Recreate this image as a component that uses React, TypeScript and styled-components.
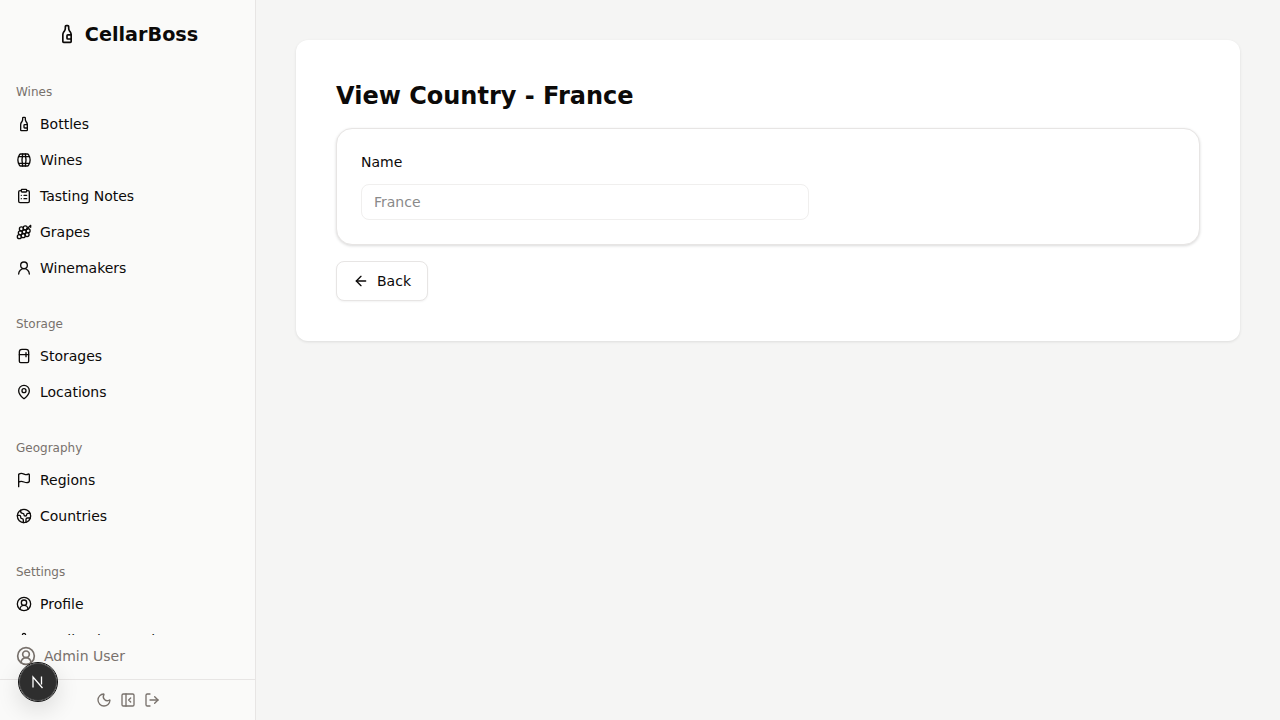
import React from 'react';
import styled, { createGlobalStyle } from 'styled-components';
import {
  ArrowLeft,
  BottleWine,
  CircleUserRound,
  ClipboardList,
  Earth,
  Flag,
  Grape,
  LogOut,
  MapPin,
  Moon,
  PanelLeftClose,
  Refrigerator,
  Settings,
  UserRound,
} from 'lucide-react';

const GlobalStyle = createGlobalStyle`
  html, body { margin: 0; padding: 0; height: 100%; }
  body {
    background: #f5f5f4;
    font-family: "DejaVu Sans", sans-serif;
    color: #0c0a09;
    overflow: hidden;
  }
  * { box-sizing: border-box; }
`;

const BarrelIcon = ({ size = 16 }: { size?: number }) => (
  <svg width={size} height={size} viewBox="0 0 24 24" fill="none" stroke="currentColor" strokeWidth="2" strokeLinecap="round" strokeLinejoin="round">
    <path d="M10 3a41 41 0 0 0 0 18" />
    <path d="M14 3a41 41 0 0 1 0 18" />
    <path d="M17 3a2 2 0 0 1 1.680.920 15.250 15.250 0 0 1 0 16.160A2 2 0 0 1 17 21H7a2 2 0 0 1-1.680-.920 15.250 15.250 0 0 1 0-16.160A2 2 0 0 1 7 3Z" />
    <path d="M3.840 17h16.320" />
    <path d="M3.840 7h16.320" />
  </svg>
);

const NextMark = () => (
  <svg width="14" height="14" viewBox="0 0 14 14" fill="none" stroke="#fff" strokeWidth="1.300">
    <path d="M2 12.500V2l9.500 11" />
    <path d="M10.500 1.500v8" />
  </svg>
);

type NavEntry = { label: string; icon: React.ReactNode };

const sections: { title: string; items: NavEntry[] }[] = [
  {
    title: 'Wines',
    items: [
      { label: 'Bottles', icon: <BottleWine size={16} /> },
      { label: 'Wines', icon: <BarrelIcon /> },
      { label: 'Tasting Notes', icon: <ClipboardList size={16} /> },
      { label: 'Grapes', icon: <Grape size={16} /> },
      { label: 'Winemakers', icon: <UserRound size={16} /> },
    ],
  },
  {
    title: 'Storage',
    items: [
      { label: 'Storages', icon: <Refrigerator size={16} /> },
      { label: 'Locations', icon: <MapPin size={16} /> },
    ],
  },
  {
    title: 'Geography',
    items: [
      { label: 'Regions', icon: <Flag size={16} /> },
      { label: 'Countries', icon: <Earth size={16} /> },
    ],
  },
  {
    title: 'Settings',
    items: [
      { label: 'Profile', icon: <CircleUserRound size={16} /> },
      { label: 'Application Settings', icon: <Settings size={16} /> },
    ],
  },
];

const Shell = styled.div`
  display: flex;
  width: 1280px;
  height: 720px;
`;

const Sidebar = styled.aside`
  position: relative;
  width: 256px;
  height: 720px;
  flex: none;
  display: flex;
  flex-direction: column;
  background: #fafaf9;
  border-right: 1px solid #e7e5e4;
`;

const Brand = styled.div`
  height: 68px;
  flex: none;
  display: flex;
  align-items: center;
  justify-content: center;
  gap: 8px;
  font-size: 19.200px;
  font-weight: 700;
`;

const NavScroll = styled.nav`
  height: 567px;
  flex: none;
  overflow: hidden;
  padding-top: 8px;
`;

const NavGroup = styled.div`
  padding: 2px 8px 8px;
  margin-bottom: 14px;
`;

const GroupTitle = styled.div`
  height: 28px;
  padding: 0 8px;
  display: flex;
  align-items: center;
  font-size: 12px;
  color: #78716c;
`;

const NavItem = styled.a`
  height: 36px;
  padding: 0 8px;
  display: flex;
  align-items: center;
  gap: 8px;
  font-size: 14px;
  color: #0c0a09;
`;

const UserRow = styled.div`
  height: 45px;
  flex: none;
  padding: 0 16px 2px;
  display: flex;
  align-items: center;
  gap: 8px;
  font-size: 14px;
  color: #78716c;
  border-bottom: 1px solid #e7e5e4;
`;

const FooterActions = styled.div`
  flex: 1;
  display: flex;
  align-items: center;
  justify-content: center;
  gap: 8px;
  color: #78716c;
`;

const DevBadge = styled.div`
  position: absolute;
  left: 19px;
  top: 663px;
  width: 38px;
  height: 38px;
  border-radius: 50%;
  background: #2e2e2e;
  border: 1px solid #4a4a4a;
  outline: 1px solid #111;
  box-shadow: 0 8px 24px rgba(0, 0, 0, 0.14);
  display: flex;
  align-items: center;
  justify-content: center;
`;

const Main = styled.main`
  flex: 1;
  padding: 40px;
`;

const Card = styled.section`
  background: #fff;
  border-radius: 12px;
  box-shadow: 0 1px 3px rgba(0, 0, 0, 0.1);
  padding: 40px;
`;

const Title = styled.h1`
  margin: 0 0 16px;
  font-size: 24px;
  line-height: 32px;
  height: 32px;
  font-weight: 700;
`;

const FieldBox = styled.div`
  height: 117px;
  padding: 24px;
  background: #fff;
  border: 1px solid #e7e5e4;
  border-radius: 16px;
  box-shadow: 0 1px 3px rgba(0, 0, 0, 0.15);
`;

const FieldLabel = styled.label`
  display: block;
  font-size: 14px;
  line-height: 20px;
  margin-bottom: 12px;
  margin-top: -1px;
`;

const TextInput = styled.input`
  display: block;
  width: 448px;
  height: 36px;
  padding: 0 12px;
  border: 1px solid #f0efee;
  border-radius: 8px;
  background: #fff;
  font-family: inherit;
  font-size: 14px;
  &::placeholder { color: #8a8a8a; opacity: 1; }
`;

const BackButton = styled.button`
  margin-top: 16px;
  height: 40px;
  padding: 0 16px;
  display: flex;
  align-items: center;
  gap: 8px;
  background: #fff;
  border: 1px solid #e7e5e4;
  border-radius: 8px;
  box-shadow: 0 1px 2px rgba(0, 0, 0, 0.05);
  font-family: inherit;
  font-size: 14px;
  color: #0c0a09;
`;

export default function App() {
  return (
    <>
      <GlobalStyle />
      <Shell>
        <Sidebar>
          <Brand>
            <BottleWine size={20} />
            CellarBoss
          </Brand>
          <NavScroll>
            {sections.map((section) => (
              <NavGroup key={section.title}>
                <GroupTitle>{section.title}</GroupTitle>
                {section.items.map((item) => (
                  <NavItem key={item.label}>
                    {item.icon}
                    {item.label}
                  </NavItem>
                ))}
              </NavGroup>
            ))}
          </NavScroll>
          <UserRow>
            <CircleUserRound size={20} />
            Admin User
          </UserRow>
          <FooterActions>
            <Moon size={16} />
            <PanelLeftClose size={16} />
            <LogOut size={16} />
          </FooterActions>
          <DevBadge>
            <NextMark />
          </DevBadge>
        </Sidebar>
        <Main>
          <Card>
            <Title>View Country - France</Title>
            <FieldBox>
              <FieldLabel>Name</FieldLabel>
              <TextInput placeholder="France" readOnly />
            </FieldBox>
            <BackButton>
              <ArrowLeft size={16} />
              Back
            </BackButton>
          </Card>
        </Main>
      </Shell>
    </>
  );
}
